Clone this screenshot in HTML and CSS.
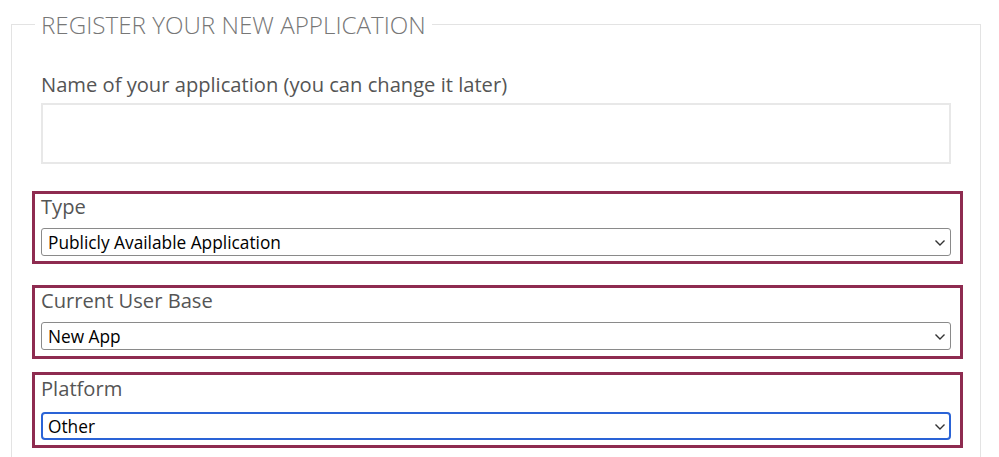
FILE: index.html
```html
<!DOCTYPE html>
<html lang="en">
<head>
<meta charset="utf-8">
<title>Register your new application</title>
<link rel="stylesheet" href="styles.css">
</head>
<body>
<form class="form">
  <fieldset class="panel">
    <legend class="panel-title">REGISTER YOUR NEW APPLICATION</legend>
    <div class="field field-name">
      <label class="field-label" for="appname">Name of your application (you can change it later)</label>
      <input class="text-input" id="appname" type="text">
    </div>
    <div class="field highlight highlight-first">
      <label class="field-label" for="type">Type</label>
      <div class="select-wrap">
        <select class="select" id="type"><option>Publicly Available Application</option></select>
        <svg class="chevron" width="12" height="8" viewBox="0 0 12 8"><path d="M1.5 1.5 L6 6 L10.5 1.5" fill="none" stroke="#333" stroke-width="1.4"/></svg>
      </div>
    </div>
    <div class="field highlight highlight-second">
      <label class="field-label" for="base">Current User Base</label>
      <div class="select-wrap">
        <select class="select" id="base"><option>New App</option></select>
        <svg class="chevron" width="12" height="8" viewBox="0 0 12 8"><path d="M1.5 1.5 L6 6 L10.5 1.5" fill="none" stroke="#333" stroke-width="1.4"/></svg>
      </div>
    </div>
    <div class="field highlight highlight-third">
      <label class="field-label" for="platform">Platform</label>
      <div class="select-wrap select-wrap-focus">
        <select class="select select-focus" id="platform"><option>Other</option></select>
        <svg class="chevron" width="12" height="8" viewBox="0 0 12 8"><path d="M1.5 1.5 L6 6 L10.5 1.5" fill="none" stroke="#333" stroke-width="1.4"/></svg>
      </div>
    </div>
  </fieldset>
</form>
</body>
</html>
```

FILE: styles.css
```css
html, body {
  margin: 0;
  padding: 0;
  background: #fff;
}
body {
  width: 999px;
  height: 457px;
  overflow: hidden;
  font-family: "Open Sans", "Noto Sans", sans-serif;
}
.form {
  margin: 0;
}
.panel {
  margin: 8px 0 0 11px;
  width: 910px;
  padding: 0 29px 40px 29px;
  border: 1px solid #e3e3e3;
  min-height: 480px;
}
.panel-title {
  margin-left: -6px;
  padding: 0 6px;
  font-size: 24.2px;
  font-weight: 300;
  color: #777;
  line-height: 33px;
}
.field {
  display: flex;
  flex-direction: column;
}
.field-label {
  font-size: 20.15px;
  line-height: 24px;
  color: #555;
}
.field-name {
  margin-top: 31px;
}
.text-input {
  margin-top: 7px;
  height: 61px;
  box-sizing: border-box;
  border: 2px solid #e8e8e8;
  padding: 0 10px;
  font: inherit;
  background: #fff;
  outline: none;
}
.highlight {
  margin: 0 -12px 0 -9px;
  padding: 0 9px 5px 6px;
  border: 3px solid #8e2b50;
}
.highlight-first { margin-top: 27px; }
.highlight-second { margin-top: 21px; padding-bottom: 6px; }
.highlight-third { margin-top: 13px; padding-top: 1px; padding-bottom: 5px; }
.select-wrap {
  position: relative;
  margin-top: 10px;
}
.select-wrap-focus {
  margin-top: 12px;
}
.select {
  display: block;
  width: 100%;
  height: 28px;
  box-sizing: border-box;
  appearance: none;
  -webkit-appearance: none;
  border: 1px solid #8a8a8a;
  border-radius: 3px;
  background: #fff;
  padding: 0 24px 0 6px;
  font-family: "Open Sans", "Noto Sans", sans-serif;
  font-size: 17.3px;
  color: #000;
  outline: none;
}
.select-focus {
  border: 2px solid #2a63d6;
  border-radius: 4px;
  padding-left: 5px;
}
.chevron {
  position: absolute;
  right: 5px;
  top: 11px;
  pointer-events: none;
}
```
